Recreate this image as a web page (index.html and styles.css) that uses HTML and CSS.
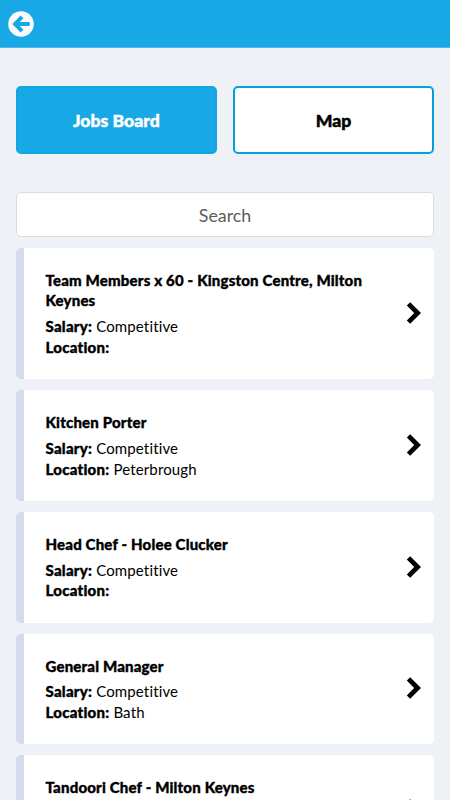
FILE: index.html
```html
<!DOCTYPE html>
<html lang="en">
<head>
<meta charset="utf-8">
<title>Jobs Board</title>
<link rel="stylesheet" href="styles.css">
</head>
<body>
<header class="bar">
  <svg class="back" viewBox="0 0 26 26"><circle cx="13" cy="13" r="12.8" fill="#f7f9fa"/><path d="M4.3 13l8.3-8.6 2.9 2.8-3.7 3.8h9.9v4h-9.9l3.7 3.8-2.9 2.8z" fill="#18a8e6"/></svg>
</header>
<main class="page">
  <nav class="tabs"><a class="tab active">Jobs Board</a><a class="tab">Map</a></nav>
  <input class="search" type="text" placeholder="Search">
  <section class="jobs">
    <article class="job"><div><h2>Team Members x 60 - Kingston Centre, Milton Keynes</h2><p><b>Salary:</b> Competitive</p><p><b>Location:</b></p></div><svg class="chev" viewBox="0 0 16 22"><path d="M4.2 0.2L15 11 4.2 21.8 0.8 18.4 8.2 11 0.8 3.6z"/></svg></article>
    <article class="job"><div><h2>Kitchen Porter</h2><p><b>Salary:</b> Competitive</p><p><b>Location:</b> Peterbrough</p></div><svg class="chev" viewBox="0 0 16 22"><path d="M4.2 0.2L15 11 4.2 21.8 0.8 18.4 8.2 11 0.8 3.6z"/></svg></article>
    <article class="job"><div><h2>Head Chef - Holee Clucker</h2><p><b>Salary:</b> Competitive</p><p><b>Location:</b></p></div><svg class="chev" viewBox="0 0 16 22"><path d="M4.2 0.2L15 11 4.2 21.8 0.8 18.4 8.2 11 0.8 3.6z"/></svg></article>
    <article class="job"><div><h2>General Manager</h2><p><b>Salary:</b> Competitive</p><p><b>Location:</b> Bath</p></div><svg class="chev" viewBox="0 0 16 22"><path d="M4.2 0.2L15 11 4.2 21.8 0.8 18.4 8.2 11 0.8 3.6z"/></svg></article>
    <article class="job"><div><h2>Tandoori Chef - Milton Keynes</h2></div><svg class="chev low" viewBox="0 0 16 22"><path d="M4.2 0.2L15 11 4.2 21.8 0.8 18.4 8.2 11 0.8 3.6z"/></svg></article>
  </section>
</main>
</body>
</html>
```

FILE: styles.css
```css
* { box-sizing: border-box; }
html, body { height: 800px; overflow: hidden; }
body { margin: 0; background: #eef2f7; color: #000; font-family: Lato, sans-serif; font-size: 15px; font-variant-ligatures: none; }
.bar { height: 48px; background: #18a8e6; border-bottom: 1px solid #4fb9ec; padding: 11px 8.4px; }
.back { display: block; width: 26px; height: 26px; }
.page { padding: 38px 16px 0; }
.tabs { display: flex; gap: 16.5px; }
.tab { flex: 1; height: 68.3px; display: flex; align-items: center; justify-content: center; border: 2px solid #079fe0; border-radius: 5px; background: #fff; font-size: 17.6px; font-weight: 900; padding-top: 1px; -webkit-text-stroke: 0.45px; }
.active { background: #18a8e6; border-color: #12a4e3; color: #fff; }
.search { display: block; width: 100%; height: 44.5px; margin: 38.2px 0 11px; border: 1px solid #dcdcdc; border-radius: 5px; background: #fff; text-align: center; font: 17.8px Lato, sans-serif; }
.search::placeholder { color: #5c5c5c; opacity: 1; }
.jobs { display: flex; flex-direction: column; gap: 11.1px; }
.job { display: flex; align-items: center; justify-content: space-between; background: #fff; border-left: 8px solid #d5dbec; border-radius: 5px; padding: 21.9px 12px 21.6px 21.5px; line-height: 20.6px; min-height: 110.6px; }
.job:last-child { align-items: flex-start; }
.job h2 { margin: 0 0 5.3px; font-size: 15px; font-weight: 900; line-height: 20.6px; max-width: 335px; letter-spacing: 0.18px; -webkit-text-stroke: 0.35px; }
.job p { margin: 0; letter-spacing: 0.15px; }
.job b { font-weight: 900; letter-spacing: 0.25px; -webkit-text-stroke: 0.35px; }
.chev { width: 16px; height: 22px; flex: none; position: relative; top: -0.6px; }
.chev.low { margin-top: 22px; }
```
